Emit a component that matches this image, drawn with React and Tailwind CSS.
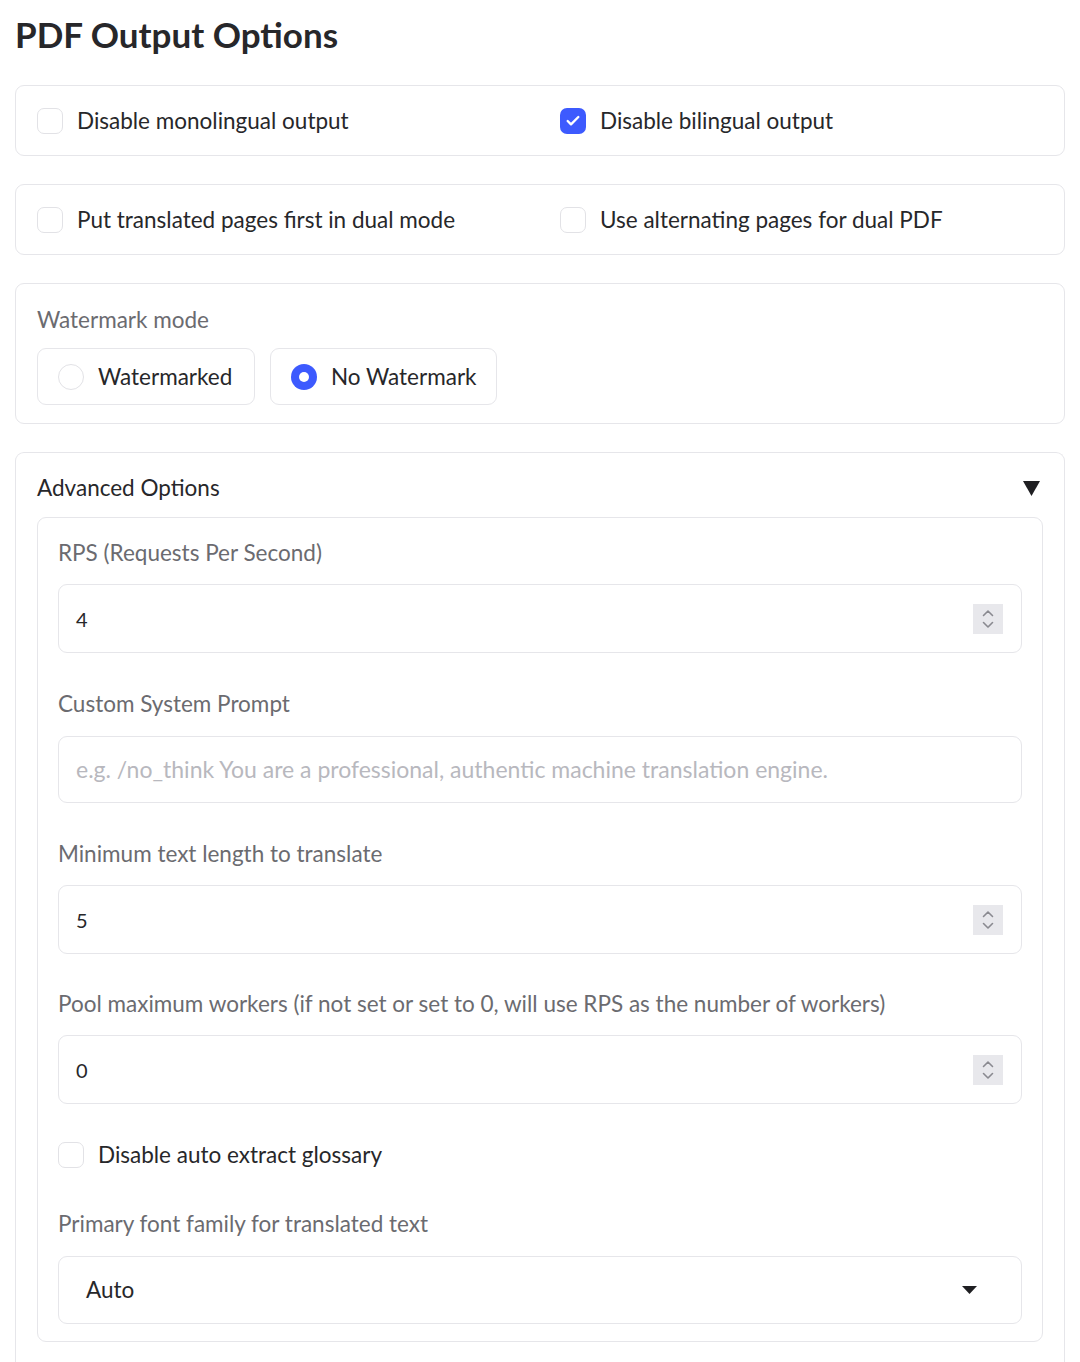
import { Check } from "lucide-react";

const font = { fontFamily: "Lato, 'Noto Sans', sans-serif" };

function Checkbox({ checked }) {
  return checked ? (
    <span className="flex h-[26px] w-[26px] shrink-0 items-center justify-center rounded-[7px] bg-[#3d5afe]">
      <Check className="h-[16px] w-[16px] text-white" strokeWidth={3.5} />
    </span>
  ) : (
    <span className="h-[26px] w-[26px] shrink-0 rounded-[7px] border border-[#e2e2e6] bg-white" />
  );
}

function Radio({ checked }) {
  return checked ? (
    <span className="flex h-[26px] w-[26px] shrink-0 items-center justify-center rounded-full bg-[#3d5afe]">
      <span className="h-[10px] w-[10px] rounded-full bg-white" />
    </span>
  ) : (
    <span className="h-[26px] w-[26px] shrink-0 rounded-full border border-[#e2e2e6] bg-white" />
  );
}

function CheckRow({ left, right }) {
  return (
    <div className="grid h-[71px] grid-cols-[523px_1fr] items-center rounded-[9px] border border-[#e6e6ea] bg-white pl-[21px]">
      <label className="flex items-center gap-[14px]">
        <Checkbox checked={left.checked} />
        <span className="text-[22.5px] text-[#27272a]">{left.text}</span>
      </label>
      <label className="flex items-center gap-[14px]">
        <Checkbox checked={right.checked} />
        <span className="text-[22.5px] text-[#27272a]">{right.text}</span>
      </label>
    </div>
  );
}

function Spinner() {
  return (
    <span className="flex h-[30px] w-[30px] flex-col items-center justify-center bg-[#e8e8ec]">
      <svg width="14" height="22" viewBox="0 0 14 22" fill="none" stroke="#8a8a90" strokeWidth="1.6" strokeLinecap="round" strokeLinejoin="round">
        <path d="M2.5 7.5 7 3l4.5 4.5" />
        <path d="M2.5 14.5 7 19l4.5-4.5" />
      </svg>
    </span>
  );
}

function NumberField({ label, value }) {
  return (
    <div className="flex flex-col">
      <div className="flex h-[40px] items-center text-[22.5px] text-[#6b6b70]">{label}</div>
      <div className="mt-[11px] flex h-[69px] items-center justify-between rounded-[9px] border border-[#e6e6ea] bg-white pl-[17px] pr-[18px]">
        <span className="text-[20px] text-[#27272a]">{value}</span>
        <Spinner />
      </div>
    </div>
  );
}

export default function App() {
  return (
    <div className="min-h-[1362px] bg-white px-[15px] pt-[8px] pb-0" style={font}>
      <h1 className="mb-[25px] h-[52px] text-[35px] font-bold leading-[52px] text-[#27272a]">PDF Output Options</h1>

      <div className="flex flex-col gap-[28px]">
        <CheckRow
          left={{ text: "Disable monolingual output", checked: false }}
          right={{ text: "Disable bilingual output", checked: true }}
        />
        <CheckRow
          left={{ text: "Put translated pages first in dual mode", checked: false }}
          right={{ text: "Use alternating pages for dual PDF", checked: false }}
        />

        <div className="rounded-[9px] border border-[#e6e6ea] bg-white px-[21px] pt-[16px] pb-[18px]">
          <div className="flex h-[40px] items-center text-[22.5px] text-[#6b6b70]">Watermark mode</div>
          <div className="mt-[8px] flex gap-[15px]">
            <label className="flex h-[57px] w-[218px] items-center gap-[14px] rounded-[9px] border border-[#e6e6ea] pl-[20px]">
              <Radio checked={false} />
              <span className="text-[22.5px] text-[#27272a]">Watermarked</span>
            </label>
            <label className="flex h-[57px] w-[227px] items-center gap-[14px] rounded-[9px] border border-[#e6e6ea] pl-[20px]">
              <Radio checked />
              <span className="text-[22.5px] text-[#27272a]">No Watermark</span>
            </label>
          </div>
        </div>

        <div className="rounded-t-[9px] border border-b-0 border-[#e6e6ea] bg-white px-[21px] pt-[15px] pb-[20px]">
          <div className="flex h-[40px] items-center justify-between">
            <span className="text-[22.5px] text-[#27272a]">Advanced Options</span>
            <svg width="17" height="15" viewBox="0 0 17 15" className="mr-[3px]">
              <path d="M0 0h17L8.5 15z" fill="#1f1f22" />
            </svg>
          </div>

          <div className="mt-[9px] flex flex-col rounded-[9px] border border-[#e6e6ea] bg-white px-[20px] pt-[15px] pb-[17px]">
            <NumberField label="RPS (Requests Per Second)" value="4" />

            <div className="mt-[31px] flex flex-col">
              <div className="flex h-[40px] items-center text-[22.5px] text-[#6b6b70]">Custom System Prompt</div>
              <div className="mt-[12px] flex h-[67px] items-center rounded-[9px] border border-[#e6e6ea] bg-white px-[17px]">
                <span className="text-[23px] text-[#b8b8be]">
                  e.g. /no_think You are a professional, authentic machine translation engine.
                </span>
              </div>
            </div>

            <div className="mt-[31px]">
              <NumberField label="Minimum text length to translate" value="5" />
            </div>
            <div className="mt-[30px]">
              <NumberField label="Pool maximum workers (if not set or set to 0, will use RPS as the number of workers)" value="0" />
            </div>

            <label className="mt-[31px] flex h-[40px] items-center gap-[14px]">
              <Checkbox checked={false} />
              <span className="text-[22.5px] text-[#27272a]">Disable auto extract glossary</span>
            </label>

            <div className="mt-[29px] flex flex-col">
              <div className="flex h-[40px] items-center text-[22.5px] text-[#6b6b70]">Primary font family for translated text</div>
              <div className="mt-[12px] flex h-[68px] items-center justify-between rounded-[9px] border border-[#e6e6ea] bg-white pl-[27px] pr-[44px]">
                <span className="text-[22.5px] text-[#27272a]">Auto</span>
                <svg width="15" height="8" viewBox="0 0 15 8">
                  <path d="M0 0h15L7.5 8z" fill="#1f1f22" />
                </svg>
              </div>
            </div>
          </div>
        </div>
      </div>
    </div>
  );
}
